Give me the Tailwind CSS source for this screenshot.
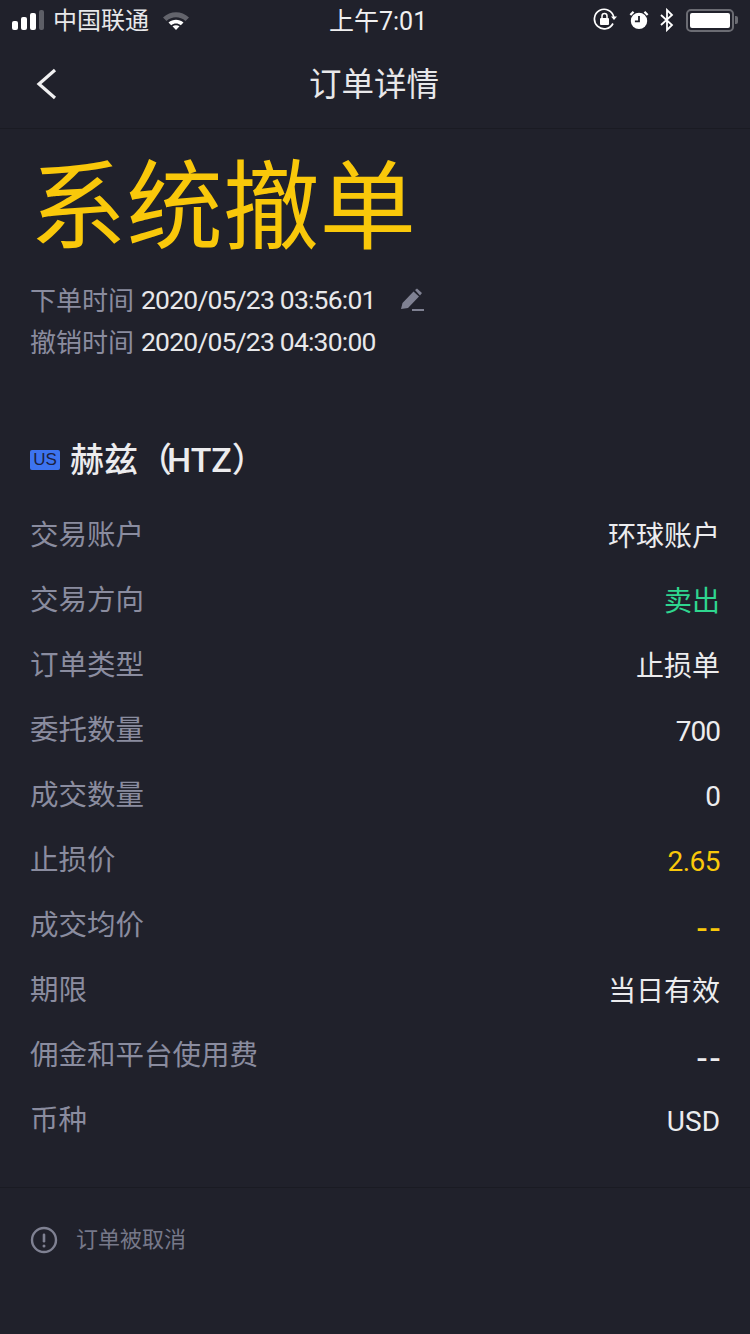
<!DOCTYPE html>
<html lang="zh-CN">
<head>
  <meta charset="UTF-8" />
  <title>订单详情</title>
  <script src="https://cdn.jsdelivr.net/npm/@tailwindcss/browser@4"></script>
</head>
<body class="bg-[#20212b] w-[750px] h-[1334px] overflow-hidden font-['Roboto','Noto_Sans_CJK_SC',sans-serif]">
  <!-- status bar -->
  <div class="h-10 flex items-center justify-between pl-3 pr-[12px] text-white relative">
    <div class="flex items-center">
      <div class="flex items-end gap-[3.500px] w-[33px] h-[20px]">
        <span class="w-[5.500px] h-[9px] rounded-[2px] bg-white"></span>
        <span class="w-[5.500px] h-[13px] rounded-[2px] bg-white"></span>
        <span class="w-[5.500px] h-[17px] rounded-[2px] bg-white"></span>
        <span class="w-[5px] h-[20px] rounded-[2px] bg-[#5d5e66]"></span>
      </div>
      <span class="ml-[8px] text-[24px] leading-none text-[#e8e8ea] mt-[2px]">中国联通</span>
      <svg class="ml-[13px] mt-[1px]" width="28" height="20" viewBox="0 0 28 20">
        <path d="M1 6.500C8.500 -0.500 19.500 -0.500 27 6.500L23.500 10C18 5 10 5 4.500 10Z" fill="#63646c"/>
        <path d="M6.500 11.500C11 7.800 17 7.800 21.500 11.500L18.800 14.200C16 12 12 12 9.200 14.200Z" fill="#fff"/>
        <path d="M10.500 15.300C12.500 13.800 15.500 13.800 17.500 15.300L14 19Z" fill="#fff"/>
      </svg>
    </div>
    <span class="absolute left-[329px] top-[6px] text-[25px] leading-[32px] text-[#f0f0f1]">上午7:01</span>
    <div class="flex items-center">
      <svg width="24" height="24" viewBox="0 0 24 24" fill="none">
        <path d="M20 15.500A9.800 9.800 0 1 1 20.800 9" stroke="#fff" stroke-width="1.700"/>
        <path d="M18 8.500h6l-3 3.500z" fill="#fff"/>
        <rect x="7" y="10" width="9" height="7" rx="1" fill="#fff"/>
        <path d="M9 10V8a2.500 2.500 0 0 1 5 0v2" stroke="#fff" stroke-width="1.500"/>
      </svg>
      <svg class="ml-[12px]" width="20" height="20" viewBox="0 0 22 22" fill="none">
        <circle cx="11" cy="12" r="9" fill="#fff"/>
        <path d="M11 6.500V12.500H6.500" stroke="#20212b" stroke-width="2"/>
        <path d="M1.500 5.500L5 2M20.500 5.500L17 2" stroke="#fff" stroke-width="2.500"/>
      </svg>
      <svg class="ml-[10px]" width="16" height="24" viewBox="0 0 16 24" fill="none">
        <path d="M2 7L13 17L8 22V2L13 7L2 17" stroke="#fff" stroke-width="1.800"/>
      </svg>
      <div class="ml-[11px] w-[48px] h-[23px] rounded-[5px] border-2 border-[#6b6c73] p-[2px]">
        <div class="h-full rounded-[2px] bg-white"></div>
      </div>
      <span class="ml-[1px] w-[3px] h-[8px] rounded-r-[2px] bg-[#6b6c73]"></span>
    </div>
  </div>

  <!-- nav -->
  <div class="h-[89px] border-b border-[#1a1b23] relative flex items-center justify-center">
    <svg class="absolute left-[36px] top-[27px]" width="22" height="34" viewBox="0 0 22 34" fill="none">
      <path d="M19 3L3 17L19 31" stroke="#f0f0f1" stroke-width="3.200"/>
    </svg>
    <span class="text-[32.500px] leading-none text-[#e8e8ea] -ml-[2px] mt-[2px]">订单详情</span>
  </div>

  <!-- status title -->
  <div class="pl-[30px] pt-[24px]">
    <h1 class="text-[96.500px] leading-[110px] text-[#f9c80a] font-normal">系统撤单</h1>
    <div class="mt-[17px] flex items-center h-[42px]">
      <span class="text-[26px] text-[#8a8c9f]">下单时间</span>
      <span class="ml-[7px] -mt-[2px] text-[26.500px] tracking-[-0.800px] text-[#e8e8ea]">2020/05/23 03:56:01</span>
      <svg class="ml-[24px] -mt-[2px]" width="24" height="24" viewBox="0 0 24 24">
        <path d="M1 21L2.500 15L13.500 3.500L19 8.500L8 20Z M15 2L17 0.500L22 5L20 7.500Z" fill="#7f8192"/>
        <rect x="12" y="21" width="12" height="2" fill="#7f8192"/>
      </svg>
    </div>
    <div class="flex items-center h-[42px]">
      <span class="text-[26px] text-[#8a8c9f]">撤销时间</span>
      <span class="ml-[7px] -mt-[2px] text-[26.500px] tracking-[-0.800px] text-[#e8e8ea]">2020/05/23 04:30:00</span>
    </div>
  </div>

  <!-- stock name -->
  <div class="mt-[75px] px-[30px] flex items-center h-[42px]">
    <span class="w-[30px] h-[20px] rounded-[2px] bg-[#3d74f0] text-[#1c2140] font-['Liberation_Sans',sans-serif] text-[17px] leading-[20px] text-center">US</span>
    <span class="ml-[10px] text-[34px] leading-none text-[#ececee] font-medium">赫兹<span class="tracking-[-5px]">（</span>HTZ）</span>
  </div>

  <!-- rows -->
  <div class="mt-[23px] px-[30px] text-[28.500px] text-[#8a8c9f]">
    <div class="h-[65px] flex items-center justify-between"><span>交易账户</span><span class="text-[28px] text-[#ececee]">环球账户</span></div>
    <div class="h-[65px] flex items-center justify-between"><span>交易方向</span><span class="text-[28px] text-[#2fd68f]">卖出</span></div>
    <div class="h-[65px] flex items-center justify-between"><span>订单类型</span><span class="text-[28px] text-[#ececee]">止损单</span></div>
    <div class="h-[65px] flex items-center justify-between"><span>委托数量</span><span class="text-[28px] tracking-[-1px] text-[#ececee]">700</span></div>
    <div class="h-[65px] flex items-center justify-between"><span>成交数量</span><span class="text-[28px] tracking-[-1px] text-[#ececee]">0</span></div>
    <div class="h-[65px] flex items-center justify-between"><span>止损价</span><span class="text-[28px] tracking-[-0.500px] text-[#f9c80a]">2.65</span></div>
    <div class="h-[65px] flex items-center justify-between"><span>成交均价</span><span class="text-[36px] leading-none tracking-[3px] -mr-[3px] mt-[4px] text-[#f9c80a]">--</span></div>
    <div class="h-[65px] flex items-center justify-between"><span>期限</span><span class="text-[28px] text-[#ececee]">当日有效</span></div>
    <div class="h-[65px] flex items-center justify-between"><span>佣金和平台使用费</span><span class="text-[36px] leading-none tracking-[3px] -mr-[3px] mt-[4px] text-[#ececee]">--</span></div>
    <div class="h-[65px] flex items-center justify-between"><span>币种</span><span class="text-[28px] text-[#ececee]">USD</span></div>
  </div>

  <!-- footer note -->
  <div class="mt-[33px] border-t border-[#1a1b23] px-[30px] pt-[38px] flex items-center">
    <svg width="28" height="28" viewBox="0 0 28 28" fill="none">
      <circle cx="14" cy="14" r="12" stroke="#7f8192" stroke-width="2.400"/>
      <rect x="12.700" y="7.500" width="2.600" height="9" rx="1.300" fill="#7f8192"/>
      <circle cx="14" cy="20" r="1.500" fill="#7f8192"/>
    </svg>
    <span class="ml-[18px] text-[22px] leading-[28px] text-[#767889]">订单被取消</span>
  </div>
</body>
</html>
